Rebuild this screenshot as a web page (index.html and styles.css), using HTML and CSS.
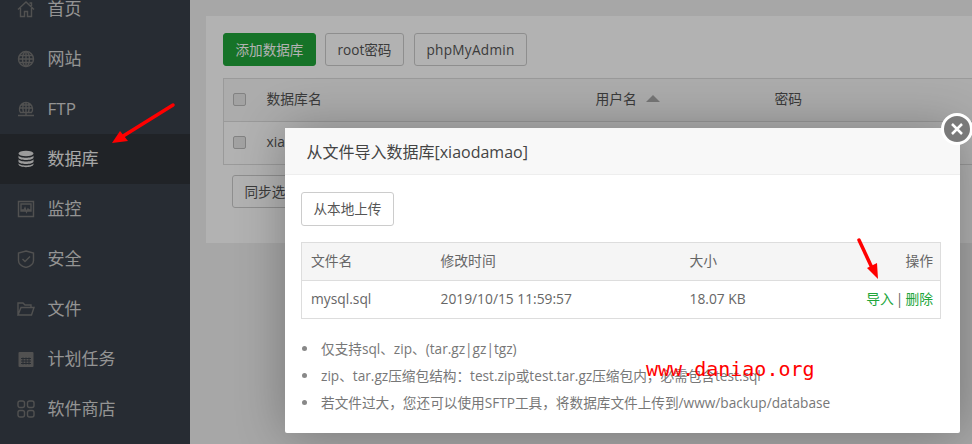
FILE: index.html
```html
<!DOCTYPE html>
<html lang="zh-CN">
<head>
    <meta charset="UTF-8">
    <meta name="viewport" content="width=device-width, initial-scale=1.0">
    <title>数据库</title>
    <link rel="stylesheet" href="styles.css">
</head>
<body>
    <div class="page">
        <ul class="menu">
            <li><svg viewBox="0 0 18 18"><path d="M1 9.500 9 2l8 7.500M3.500 8v8.500h4v-5h3v5h4V8M12.500 3h2v3"/></svg>首页</li>
            <li><svg viewBox="0 0 18 18"><circle cx="9" cy="9" r="7.500"/><ellipse cx="9" cy="9" rx="3.500" ry="7.500"/><path d="M9 1.500v15M1.500 9h15M2.500 5.500h13M2.500 12.500h13"/></svg>网站</li>
            <li><svg viewBox="0 0 18 18"><path d="M3.500 12.500a6.500 6.500 0 1 1 11 0zM9 2v10.500M2.800 8h12.400M4 5h10M6.500 2.800Q5 8 6.500 12.500M11.500 2.800Q13 8 11.500 12.500M1 15.500h16M9 12.500v3"/></svg>FTP</li>
            <li class="on"><svg viewBox="0 0 18 18"><ellipse class="fill" cx="9" cy="3.500" rx="7.500" ry="2.800"/><path class="fill" d="M1.500 5.500c1 3 14 3 15 0v2.300c-1 3-14 3-15 0zM1.500 9.300c1 3 14 3 15 0v2.400c-1 3-14 3-15 0zM1.500 13.200c1 3 14 3 15 0v1.300c-1 3.500-14 3.500-15 0z"/></svg>数据库</li>
            <li><svg viewBox="0 0 18 18"><path d="M1.500 1.500h15v15h-15zM4 4h10v7H4zM4 10h3l1-2 1.500 4 1.500-3 1 1h2"/></svg>监控</li>
            <li><svg viewBox="0 0 18 18"><path d="M9 1 16.500 3v7.500c0 3.500-4 6-7.500 7-3.500-1-7.500-3.500-7.500-7V3zM5.500 9l2.500 2.500 5-5"/></svg>安全</li>
            <li><svg viewBox="0 0 18 18"><path d="M1 15V3h5l2 2h6v2.500M1 15l3-7.500h13L14.500 15z"/></svg>文件</li>
            <li><svg viewBox="0 0 18 18"><path class="fill" d="M2.500 2h13a1 1 0 0 1 1 1v13a1 1 0 0 1-1 1h-13a1 1 0 0 1-1-1V3a1 1 0 0 1 1-1z"/><path class="cut" d="M4 8.500h10M4 11h10M4 13.500h10M6 7.500v7M9 7.500v7M12 7.500v7"/></svg>计划任务</li>
            <li><svg viewBox="0 0 18 18"><rect x="1" y="1" width="6.500" height="6.500" rx="2"/><rect x="10.500" y="1" width="6.500" height="6.500" rx="2"/><rect x="1" y="10.500" width="6.500" height="6.500" rx="2"/><rect x="10.500" y="10.500" width="6.500" height="6.500" rx="2"/></svg>软件商店</li>
        </ul>
        <div class="main">
            <div class="card">
                <div class="actions">
                    <button class="btn green">添加数据库</button>
                    <button class="btn">root密码</button>
                    <button class="btn pma">phpMyAdmin</button>
                </div>
                <table class="db-table">
                    <tr class="head">
                        <td class="c-check"><span class="check"></span></td>
                        <td class="c-name">数据库名</td>
                        <td class="c-user">用户名 <span class="sort"></span></td>
                        <td>密码</td>
                    </tr>
                    <tr>
                        <td class="c-check"><span class="check"></span></td>
                        <td>xiaodamao</td>
                        <td>xiaodamao</td>
                        <td>********</td>
                    </tr>
                </table>
                <button class="btn sync">同步选中</button>
            </div>
        </div>
    </div>

    <div class="shade"></div>

    <div class="modal">
        <div class="modal-title">从文件导入数据库[xiaodamao]</div>
        <div class="modal-body">
            <button class="btn upload">从本地上传</button>
            <table class="file-table">
                <tr class="head">
                    <td class="f-name">文件名</td>
                    <td class="f-time">修改时间</td>
                    <td class="f-size">大小</td>
                    <td class="f-op">操作</td>
                </tr>
                <tr>
                    <td>mysql.sql</td>
                    <td>2019/10/15 11:59:57</td>
                    <td>18.07 KB</td>
                    <td class="f-op"><a>导入</a><span class="sep">|</span><a>删除</a></td>
                </tr>
            </table>
            <ul class="tips">
                <li>仅支持sql、zip、(tar.gz|gz|tgz)</li>
                <li>zip、tar.gz压缩包结构：test.zip或test.tar.gz压缩包内，必需包含test.sql</li>
                <li>若文件过大，您还可以使用SFTP工具，将数据库文件上传到/www/backup/database</li>
            </ul>
        </div>
    </div>
    <div class="close"><svg viewBox="0 0 14 14"><path d="M2 2 12 12M12 2 2 12"/></svg></div>

    <svg class="arrow arrow-menu" viewBox="0 0 66 42"><path d="M63 3 10 36"/><polygon points="2,41 10,29 18,39"/></svg>
    <svg class="arrow arrow-import" viewBox="0 0 26 42"><path d="M3 2 17 32"/><polygon points="22,41 11,30 21,25"/></svg>
    <div class="mark">www.daniao.org</div>
</body>
</html>
```

FILE: styles.css
```css
* {
    box-sizing: border-box;
}
html, body {
    height: 100%;
}
body {
    margin: 0;
    overflow: hidden;
    font-family: "Open Sans", "Noto Sans CJK SC", sans-serif;
    font-size: 13.800px;
    line-height: 1.4;
    color: #666;
}
.page {
    display: flex;
    height: 444px;
    overflow: hidden;
}
.menu {
    width: 190px;
    flex: none;
    margin: -16px 0 0;
    padding: 0;
    list-style: none;
    background-color: #394049;
}
.menu li {
    display: flex;
    align-items: center;
    gap: 12.500px;
    height: 50px;
    padding: 0 0 1px 17px;
    font-size: 17px;
    color: #d4d4d4;
}
.menu li.on {
    background-color: #2f3338;
    color: #f0f0f0;
}
.menu svg {
    width: 18px;
    height: 18px;
    flex: none;
    fill: none;
    stroke: #747474;
    stroke-width: 1.400;
}
.menu svg .fill {
    fill: #747474;
    stroke: none;
}
.menu svg .cut {
    stroke: #394049;
    stroke-width: 1;
}
.menu .on svg .fill {
    fill: #dedede;
}
.main {
    flex: 1;
    background-color: #f0f0f0;
    padding: 16px 0 0 16px;
    overflow: hidden;
}
.card {
    width: 790px;
    height: 227px;
    background-color: #fff;
    padding: 17px 17px 0;
}
.actions {
    display: flex;
    gap: 9px;
}
.btn {
    height: 33px;
    padding: 0 11.500px;
    border: 1px solid #ccc;
    border-radius: 3px;
    background-color: #fff;
    font: inherit;
    font-size: 13.600px;
    color: #555;
}
.btn.green {
    background-color: #20a53a;
    border-color: #20a53a;
    color: #fff;
}
.btn.pma {
    margin-left: 1px;
    letter-spacing: 0.300px;
}
.db-table {
    width: 100%;
    margin-top: 12px;
    border-collapse: collapse;
    border: 1px solid #ddd;
    color: #555;
}
.db-table td {
    height: 43px;
    padding: 0 0 2px;
    border-top: 1px solid #ddd;
}
.db-table .head {
    background-color: #f6f6f6;
}
.db-table .c-check {
    width: 43px;
    padding-left: 9px;
}
.c-name {
    width: 329px;
}
.c-user {
    width: 179px;
}
.check {
    display: block;
    width: 13px;
    height: 13px;
    border: 1px solid #bbb;
    border-radius: 2px;
    background-color: #e8e8e8;
}
.sort {
    display: inline-block;
    margin-left: 6px;
    border-left: 7px solid transparent;
    border-right: 7px solid transparent;
    border-bottom: 7px solid #aaa;
    vertical-align: 2px;
}
.sync {
    margin: 10px 0 0 9px;
}
.shade {
    position: absolute;
    inset: 0;
    background-color: rgba(0, 0, 0, 0.3);
}
.modal {
    position: absolute;
    left: 285px;
    top: 128px;
    width: 675px;
    height: 305px;
    background-color: #fff;
    border-radius: 2px;
    box-shadow: 1px 1px 50px rgba(0, 0, 0, 0.3);
}
.modal-title {
    height: 47px;
    padding-left: 21.500px;
    line-height: 48px;
    font-size: 16px;
    color: #444;
    background-color: #f8f8f8;
    border-bottom: 1px solid #eee;
}
.modal-body {
    padding: 17px 19px 0 16px;
}
.upload {
    display: block;
    height: 34px;
}
.file-table {
    width: 640px;
    margin-top: 16px;
    border-collapse: collapse;
    border: 1px solid #ddd;
}
.file-table td {
    height: 38px;
    padding: 0 0 2px 9px;
    border-top: 1px solid #ddd;
}
.file-table .head {
    background-color: #f5f5f5;
}
.f-name {
    width: 130px;
}
.f-time {
    width: 249px;
}
.f-size {
    width: 150px;
}
.file-table .f-op {
    text-align: right;
    padding-right: 7px;
}
.f-op a {
    color: #20a53a;
}
.sep {
    margin: 0 2px;
}
.tips {
    margin: 16px 0 0 1px;
    padding: 0;
    list-style: none;
    font-size: 13.650px;
    color: #777;
}
.tips li {
    display: flex;
    align-items: center;
    height: 27px;
    line-height: 27px;
    white-space: nowrap;
}
.tips li::before {
    content: "";
    width: 5px;
    height: 5px;
    margin-right: 14px;
    border-radius: 50%;
    background-color: #888;
}
.close {
    position: absolute;
    left: 941px;
    top: 113px;
    width: 32px;
    height: 32px;
    display: flex;
    align-items: center;
    justify-content: center;
    border: 3px solid #fff;
    border-radius: 50%;
    background-color: #7a7a7a;
}
.close svg {
    width: 14px;
    height: 14px;
    fill: none;
    stroke: #fff;
    stroke-width: 2.500;
}
.arrow {
    position: absolute;
    fill: #f00;
    stroke: none;
}
.arrow path {
    fill: none;
    stroke: #f00;
    stroke-width: 3.500;
    stroke-linecap: round;
}
.arrow-menu {
    left: 110px;
    top: 102px;
    width: 66px;
    height: 42px;
}
.arrow-import {
    left: 856px;
    top: 238px;
    width: 26px;
    height: 42px;
}
.mark {
    position: absolute;
    left: 646px;
    top: 355px;
    font-family: "DejaVu Sans Mono", monospace;
    font-size: 20px;
    color: #f00;
}
```
